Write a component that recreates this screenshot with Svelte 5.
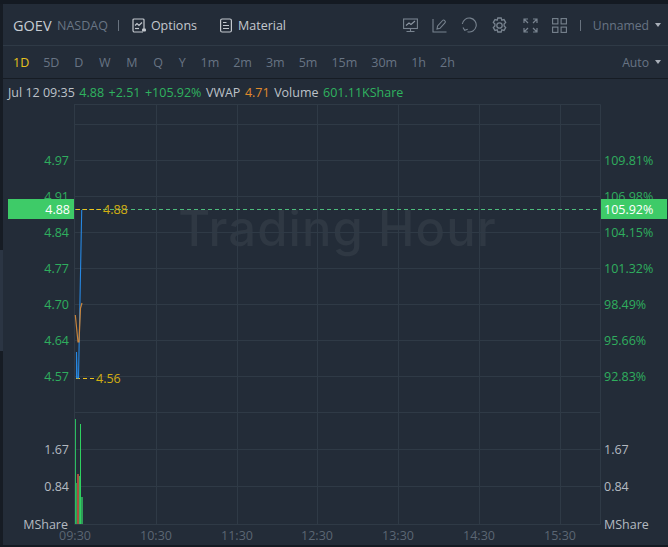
<script>
  const periods = ['1D','5D','D','W','M','Q','Y','1m','2m','3m','5m','15m','30m','1h','2h'];
  const vx = [74.5,156.5,237.5,317.5,398.5,479.5,560.5];
  const hy = [124.5,160.5,196.5,232.5,268.5,304.5,340.5,376.5,412.5,449.5,486.5];
  const times = [[75,'09:30'],[156,'10:30'],[237,'11:30'],[317,'12:30'],[398,'13:30'],[479,'14:30'],[560,'15:30']];
  const left = [['4.97',160],['4.91',196],['4.84',232],['4.77',268],['4.70',304],['4.64',340],['4.57',376]];
  const right = [['109.81%',160],['106.98%',196],['104.15%',232],['101.32%',268],['98.49%',304],['95.66%',340],['92.83%',376]];
  const bars = [[75,419,1,'#2bbd60'],[76,483,1,'#2f9c57'],[77,474,2,'#a8503f'],[79,476,1,'#36b45f'],[80,424,1,'#2fd160'],[81,497,2,'#2f9c57']];
</script>

<div class="page">
  <div class="topstrip"></div>
  <div class="body">
    <div class="leftstrip"></div>
    <div class="main">
      <header class="toolbar">
        <span class="sym">GOEV</span>
        <span class="exch">NASDAQ</span>
        <span class="sep first"></span>
        <button class="tool opt">
          <svg width="15" height="15" viewBox="0 0 15 15" fill="none" stroke="#c3c8ce" stroke-width="1.2"><path d="M12 11V2a1 1 0 0 0-1-1H2a1 1 0 0 0-1 1v10.500a1.500 1.500 0 0 0 1.500 1.500H11"/><path d="M3 7.500l2-2 2 2 3-3"/><path d="M3 10.500h4"/><rect x="10" y="10.500" width="4" height="3" rx="1" fill="#c3c8ce" stroke="none"/></svg>
          Options
        </button>
        <button class="tool mat">
          <svg width="12" height="15" viewBox="0 0 12 15" fill="none" stroke="#c3c8ce" stroke-width="1.2"><rect x=".6" y="1" width="10.800" height="13" rx="1.500"/><path d="M3 4.500h3.500M3 7.500h6M3 10.500h6"/></svg>
          Material
        </button>
        <div class="icons">
          <svg width="15" height="15" viewBox="0 0 15 15" fill="none" stroke="#78838f" stroke-width="1.1"><rect x=".6" y="1" width="13.800" height="9.500"/><path d="M3 7.500l3-2.500 2 1.500 4-3.500" stroke="#8d97a3"/><path d="M7.500 10.500V13.500M3.500 13.500h8"/></svg>
          <svg width="15" height="15" viewBox="0 0 15 15" fill="none" stroke="#78838f" stroke-width="1.1"><path d="M1 1v13h13.500"/><path d="M5 11l.6-3 5-5.500a1.300 1.300 0 0 1 2 0l.3.300a1.300 1.300 0 0 1 0 2L8 10.300z"/></svg>
          <svg width="16" height="16" viewBox="0 0 16 16" fill="none" stroke="#78838f" stroke-width="1.1"><path d="M1.300 7A7 7 0 1 1 6.500 14.800"/><path d="M2 10.500l1.700 2.800 3-1"/></svg>
          <svg width="17" height="17" viewBox="0 0 17 17" fill="none" stroke="#78838f" stroke-width="1.3"><path d="M6.800 1h3.400l.6 2.200 2.200-.6 1.700 2.900-1.600 1.600 0 1.800 1.600 1.600-1.700 2.900-2.200-.6-.6 2.200H6.800l-.6-2.200-2.200.6-1.700-2.900 1.600-1.600 0-1.800-1.600-1.600L4 2.600l2.200.6z"/><circle cx="8.500" cy="8.500" r="2.700"/></svg>
          <svg width="15" height="15" viewBox="0 0 15 15" fill="none" stroke="#78838f" stroke-width="1.2"><path d="M1 5V1h4M1 1l4 4M14 5V1h-4M14 1l-4 4M1 10v4h4M1 14l4-4M14 10v4h-4M14 14l-4-4"/></svg>
          <svg width="15" height="15" viewBox="0 0 15 15" fill="none" stroke="#78838f" stroke-width="1.1"><rect x=".6" y=".6" width="5.300" height="5.300"/><rect x="9.100" y=".6" width="5.300" height="5.300"/><rect x=".6" y="9.100" width="5.300" height="5.300"/><rect x="9.100" y="9.100" width="5.300" height="5.300"/></svg>
        </div>
        <span class="sep second"></span>
        <span class="dropdown">Unnamed<i class="caret"></i></span>
      </header>

      <nav class="periods">
        {#each periods as p, i}
          <span class="period" class:active={i === 0} class:single={p.length === 1}>{p}</span>
        {/each}
        <span class="dropdown auto">Auto<i class="caret"></i></span>
      </nav>

      <div class="quote">
        <span>Jul 12 09:35</span>
        <span class="up">4.88</span>
        <span class="up">+2.51</span>
        <span class="up">+105.92%</span>
        <span>VWAP</span>
        <span class="orange">4.71</span>
        <span>Volume</span>
        <span class="up">601.11KShare</span>
      </div>
    </div>
  </div>

  <svg class="chart" width="668" height="547" viewBox="0 0 668 547">
    <text class="mark" x="337.500" y="246" text-anchor="middle">Trading Hour</text>

    {#each hy as y}<line x1="74" x2="600" y1={y} y2={y} class="grid" />{/each}
    {#each vx as x}<line x1={x} x2={x} y1="104" y2="524" class="grid" />{/each}
    <path d="M74.500 104.500H600.500V524.500H74.500Z" class="grid" />

    {#each left as [t, y]}<text class="ax up-f" x="69" y={y + 5} text-anchor="end">{t}</text>{/each}
    {#each right as [t, y]}<text class="ax up-f" x="604" y={y + 5}>{t}</text>{/each}

    <rect x="8" y="199" width="66" height="20" fill="#3ecb68" />
    <rect x="601" y="199" width="66" height="20" fill="#3ecb68" />
    <text class="ax white" x="70" y="214" text-anchor="end">4.88</text>
    <text class="ax white" x="604" y="214">105.92%</text>

    <line x1="75" x2="600" y1="209.500" y2="209.500" class="dash" />
    <line x1="76" x2="101" y1="209.500" y2="209.500" class="ydash" />
    <line x1="76" x2="97" y1="378.500" y2="378.500" class="ydash" />
    <text class="ax gold" x="103" y="214">4.88</text>
    <text class="ax gold" x="96" y="383">4.56</text>

    <path d="M76.500 378V352L77.200 378H78.500L81.700 210" class="blue" />
    <path d="M75.300 315L78 342H79L80.500 308L82 303" class="orange-l" />

    {#each bars as [x, y, w, c]}<rect {x} {y} width={w} height={524 - y} fill={c} />{/each}

    <text class="ax vol" x="69" y="454" text-anchor="end">1.67</text>
    <text class="ax vol" x="69" y="491" text-anchor="end">0.84</text>
    <text class="ax vol" x="68" y="529" text-anchor="end">MShare</text>
    <text class="ax vol" x="604" y="454">1.67</text>
    <text class="ax vol" x="604" y="491">0.84</text>
    <text class="ax vol" x="604" y="529">MShare</text>

    {#each times as [x, t]}<text class="ax time" {x} y="540" text-anchor="middle">{t}</text>{/each}
  </svg>
  <div class="bottomstrip"></div>
</div>

<style>
  :global(body) { margin: 0; background: #232c38; }
  .page { position: relative; width: 668px; height: 547px; overflow: hidden; background: #232c38; font-family: "Open Sans", "Liberation Sans", sans-serif; display: flex; flex-direction: column; }
  .topstrip { height: 4px; background: #141a22; flex: none; }
  .body { display: flex; flex: 1; }
  .leftstrip { width: 3px; flex: none; background: linear-gradient(#161c24 0 246px, #2b3543 246px 347px, #161c24 347px); }
  .main { flex: 1; display: flex; flex-direction: column; }

  .toolbar { height: 40px; padding-top: 1px; display: flex; align-items: center; border-bottom: 1px solid #2f3a46; padding-left: 10px; flex: none; }
  .sym { font-size: 14.500px; color: #c6ccd3; width: 44px; }
  .exch { font-size: 12.500px; color: #697584; }
  .sep { width: 1px; height: 11px; background: #69737f; flex: none; }
  .sep.first { margin-left: 10px; }
  .tool { display: flex; align-items: center; background: none; border: 0; padding: 0; font: inherit; font-size: 12.500px; color: #c3c8ce; }
  .opt { margin-left: 13px; gap: 4px; }
  .mat { margin-left: 23px; gap: 6px; }
  .icons { margin-left: auto; display: flex; align-items: center; gap: 14.200px; }
  .sep.second { margin-left: 13px; }
  .dropdown { display: inline-flex; align-items: center; gap: 6px; font-size: 12.200px; color: #687484; margin-left: 12px; margin-right: 7px; }
  .caret { width: 0; height: 0; border-left: 3px solid transparent; border-right: 3px solid transparent; border-top: 4px solid #a9b0b9; }

  .periods { height: 32px; display: flex; align-items: center; gap: 14px; padding-left: 10px; border-bottom: 1px solid #161c24; flex: none; }
  .period { font-size: 12.500px; color: #687484; }
  .period.single { padding: 0 0.850px; }
  .period.active { color: #e6c21c; }
  .auto { margin-left: auto; }

  .quote { display: flex; gap: 4.500px; padding: 5px 0 0 5px; font-size: 12.500px; color: #bdc2c8; white-space: nowrap; }
  .up { color: #2fb35f; }
  .orange { color: #e08a2c; }

  .chart { position: absolute; left: 0; top: 0; pointer-events: none; }
  .mark { font-family: Inter, sans-serif; font-size: 49px; font-weight: 500; letter-spacing: 1.050px; fill: #2f3843; }
  .grid { stroke: #2f3a46; stroke-width: 1; fill: none; }
  .ax { font-family: "Open Sans", "Liberation Sans", sans-serif; font-size: 12.500px; }
  .up-f { fill: #2fae5e; }
  .white { fill: #ffffff; }
  .gold { fill: #d2ae12; }
  .vol { fill: #b4bac1; }
  .time { fill: #5b6673; }
  .dash { stroke: #4dbb7c; stroke-width: 1; stroke-dasharray: 4 3; }
  .ydash { stroke: #f0c21c; stroke-width: 1; stroke-dasharray: 4 3; }
  .blue { fill: none; stroke: #2788e2; stroke-width: 1.100; }
  .orange-l { fill: none; stroke: #c9853c; stroke-width: 1.200; }
  .bottomstrip { position: absolute; left: 0; right: 0; bottom: 0; height: 2px; background: #141a22; }
</style>
